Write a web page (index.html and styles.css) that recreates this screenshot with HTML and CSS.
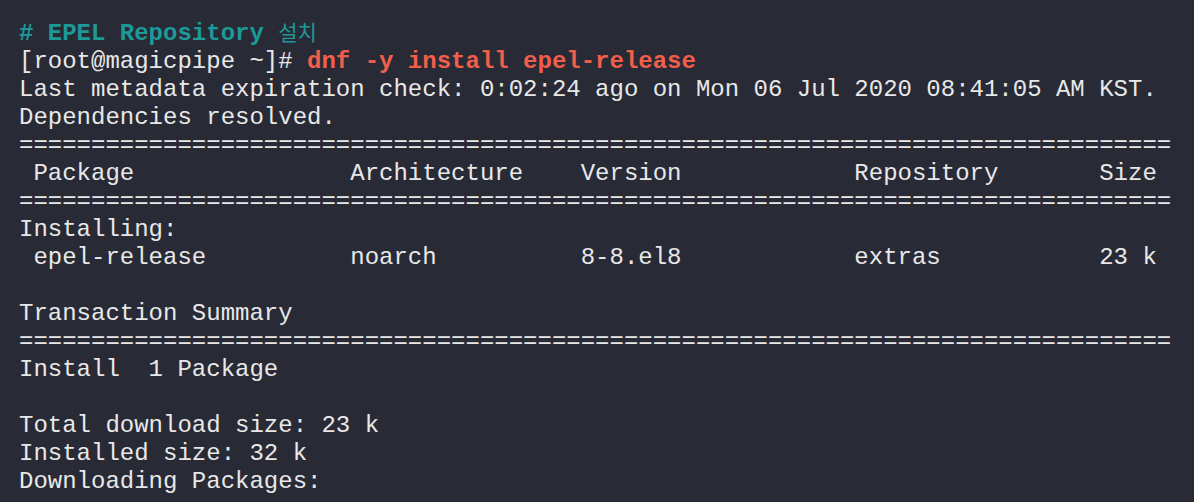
FILE: index.html
```html
<!DOCTYPE html>
<html lang="ko">
<head>
<meta charset="utf-8">
<title>EPEL Repository 설치</title>
<link rel="stylesheet" href="styles.css">
</head>
<body>
<div class="terminal">
<pre class="code"><span class="comment"># EPEL Repository <span class="ko">설치</span></span>
[root@magicpipe ~]# <span class="cmd">dnf -y install epel-release</span>
Last metadata expiration check: 0:02:24 ago on Mon 06 Jul 2020 08:41:05 AM KST.
Dependencies resolved.
================================================================================
 Package               Architecture    Version            Repository       Size
================================================================================
Installing:
 epel-release          noarch          8-8.el8            extras           23 k

Transaction Summary
================================================================================
Install  1 Package

Total download size: 23 k
Installed size: 32 k
Downloading Packages:</pre>
</div>
</body>
</html>
```
FILE: styles.css
```css
html, body {
  margin: 0;
  padding: 0;
  background: #282a36;
  height: 100%;
  overflow: hidden;
}

.terminal {
  background: #282a36;
  padding: 17px 0 0 19px;
}

.code {
  margin: 0;
  font-family: "Courier New", "Nimbus Mono PS", "Nimbus Mono L", "FreeMono", Courier, "Liberation Mono", monospace;
  font-size: 24px;
  line-height: 28px;
  color: #e8e8e8;
  white-space: pre;
}

.comment {
  color: #1c9a98;
  font-weight: bold;
}

.ko {
  font-family: "Noto Sans CJK KR", sans-serif;
  font-weight: normal;
  font-size: 21px;
}

.cmd {
  color: #f25e4a;
  font-weight: bold;
}
```
